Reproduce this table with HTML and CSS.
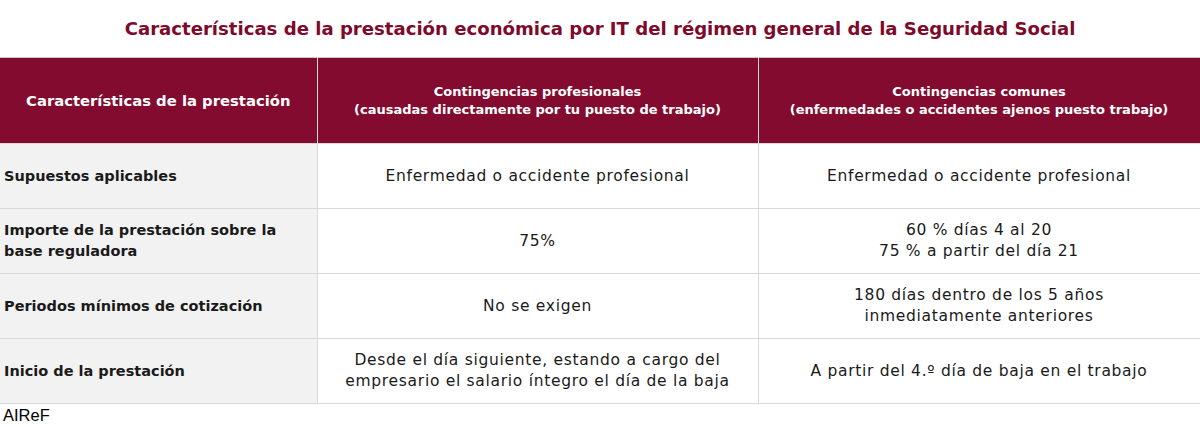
FILE: index.html
```html
<!DOCTYPE html>
<html lang="es">
<head>
<meta charset="utf-8">
<title>Prestación IT</title>
<link rel="stylesheet" href="styles.css">
</head>
<body>
<h1 class="title">Características de la prestación económica por IT del régimen general de la Seguridad Social</h1>
<table class="grid">
  <colgroup>
    <col class="c1"><col class="c2"><col class="c3">
  </colgroup>
  <thead>
    <tr>
      <th class="h-first">Características de la prestación</th>
      <th>Contingencias profesionales<br>(causadas directamente por tu puesto de trabajo)</th>
      <th>Contingencias comunes<br>(enfermedades o accidentes ajenos puesto trabajo)</th>
    </tr>
  </thead>
  <tbody>
    <tr>
      <td class="label">Supuestos aplicables</td>
      <td>Enfermedad o accidente profesional</td>
      <td>Enfermedad o accidente profesional</td>
    </tr>
    <tr>
      <td class="label">Importe de la prestación sobre la base reguladora</td>
      <td>75%</td>
      <td>60 % días 4 al 20<br>75 % a partir del día 21</td>
    </tr>
    <tr>
      <td class="label">Periodos mínimos de cotización</td>
      <td>No se exigen</td>
      <td>180 días dentro de los 5 años<br>inmediatamente anteriores</td>
    </tr>
    <tr>
      <td class="label">Inicio de la prestación</td>
      <td>Desde el día siguiente, estando a cargo del<br>empresario el salario íntegro el día de la baja</td>
      <td>A partir del 4.º día de baja en el trabajo</td>
    </tr>
  </tbody>
</table>
<p class="source">AIReF</p>
</body>
</html>
```
FILE: styles.css
```css
html, body {
  margin: 0;
  padding: 0;
  background: #ffffff;
}
body {
  width: 1200px;
  font-family: "DejaVu Sans", sans-serif;
  color: #1a1a1a;
}
.title {
  margin: 0;
  height: 57px;
  display: flex;
  align-items: center;
  justify-content: center;
  font-size: 18.1px;
  font-weight: bold;
  color: #7d0a2b;
}
.grid {
  width: 1200px;
  border-collapse: collapse;
  table-layout: fixed;
  font-size: 15.5px;
  letter-spacing: 0.7px;
}
.c1 { width: 317px; }
.c2 { width: 441px; }
.c3 { width: 442px; }
.grid th {
  background: #830b2f;
  color: #ffffff;
  font-weight: bold;
  height: 85px;
  padding: 0 4px;
  line-height: 18px;
  font-size: 13px;
  letter-spacing: 0;
  text-align: center;
  border-top: 1px solid #c9c9c9;
  border-left: 1px solid #d9a3b2;
  border-right: 1px solid #d9d9d9;
}
.grid th.h-first {
  border-left: none;
  font-size: 14.8px;
}
.grid td {
  height: 64px;
  padding: 0 4px;
  text-align: center;
  line-height: 21px;
  border: 1px solid #d9d9d9;
}
.grid td.label {
  text-align: left;
  font-weight: bold;
  font-size: 14.5px;
  letter-spacing: 0;
  background: #f2f2f2;
  border-left: none;
}
.source {
  margin: 2px 0 0 3px;
  font-family: "Liberation Sans", sans-serif;
  font-size: 16.5px;
  color: #000;
}
```
